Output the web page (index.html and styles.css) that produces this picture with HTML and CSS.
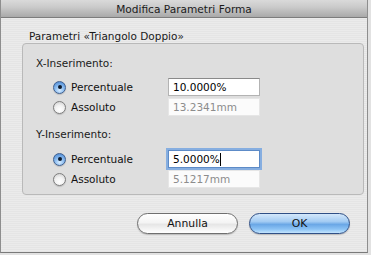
FILE: index.html
```html
<!DOCTYPE html>
<html lang="it">
<head>
<meta charset="utf-8">
<title>Modifica Parametri Forma</title>
<link rel="stylesheet" href="styles.css">
</head>
<body>
<div class="window">
  <div class="titlebar">Modifica Parametri Forma</div>
  <div class="content">
    <div class="group-label">Parametri «Triangolo Doppio»</div>
    <div class="group">
      <div class="section-title">X-Inserimento:</div>
      <div class="row">
        <label class="radio-label"><span class="radio checked"></span>Percentuale</label>
        <div class="field">10.0000%</div>
      </div>
      <div class="row">
        <label class="radio-label"><span class="radio"></span>Assoluto</label>
        <div class="field disabled">13.2341mm</div>
      </div>
      <div class="section-title second">Y-Inserimento:</div>
      <div class="row row-first">
        <label class="radio-label"><span class="radio checked"></span>Percentuale</label>
        <div class="field focused">5.0000%<span class="caret"></span></div>
      </div>
      <div class="row">
        <label class="radio-label"><span class="radio"></span>Assoluto</label>
        <div class="field disabled">5.1217mm</div>
      </div>
    </div>
    <div class="buttons">
      <button class="btn">Annulla</button>
      <button class="btn primary">OK</button>
    </div>
  </div>
</div>
</body>
</html>
```
FILE: styles.css
```css
html, body {
  margin: 0;
  padding: 0;
}
body {
  width: 371px;
  height: 255px;
  background: #e2e2e2;
  font-family: "DejaVu Sans", "Liberation Sans", sans-serif;
  font-size: 10.5px;
  color: #111;
  overflow: hidden;
}
.window {
  width: 366px;
  height: 252px;
  border-left: 1px solid #8e8e8e;
  border-right: 1px solid #8e8e8e;
  border-bottom: 1px solid #7a7a7a;
  background-color: #e8e8e8;
  background-image: repeating-linear-gradient(180deg, #ebebeb 0px, #ebebeb 1px, #e5e5e5 1px, #e5e5e5 2px);
  display: flex;
  flex-direction: column;
}
.titlebar {
  height: 17px;
  line-height: 18px;
  border-bottom: 1px solid #7c7c7c;
  background: linear-gradient(180deg, #dadada 0%, #cbcbcb 40%, #a9a9a9 100%);
  text-align: center;
  color: #1a1a1a;
  font-size: 10.6px;
}
.content {
  padding: 12px 16px 0 21px;
  display: flex;
  flex-direction: column;
}
.group-label {
  height: 13px;
  line-height: 13px;
  padding-left: 7px;
  color: #1a1a1a;
}
.group {
  width: 327px;
  height: 150px;
  border: 1px solid #b9b9b9;
  border-radius: 4px;
  background: #dedede;
  padding: 13px 0 0 13px;
  box-sizing: content-box;
  height: 137px;
  display: flex;
  flex-direction: column;
}
.section-title {
  height: 13px;
  line-height: 13px;
  color: #1a1a1a;
  margin-bottom: 8px;
}
.section-title.second {
  margin-top: 10px;
  margin-bottom: 9px;
}
.row {
  display: grid;
  grid-template-columns: 115px 92px;
  align-items: center;
  height: 18px;
  padding-left: 17px;
  margin-bottom: 2px;
}
.radio-label {
  display: flex;
  align-items: center;
  gap: 5px;
  color: #111;
}
.radio {
  width: 11px;
  height: 11px;
  border-radius: 50%;
  border: 1px solid #7d7d7d;
  background: radial-gradient(circle at 50% 70%, #ffffff 0%, #f2f2f2 45%, #c9c9c9 100%);
  box-shadow: 0 1px 1px rgba(0,0,0,0.15);
  position: relative;
  flex: none;
}
.radio.checked {
  border-color: #3f5f8e;
  background: radial-gradient(circle at 50% 75%, #d7ecff 0%, #8bbcf0 45%, #3f7fcf 100%);
}
.radio.checked::after {
  content: "";
  position: absolute;
  left: 3.5px;
  top: 3.5px;
  width: 4px;
  height: 4px;
  border-radius: 50%;
  background: #0d1a2c;
}
.field {
  height: 18px;
  box-sizing: border-box;
  background: #fff;
  border: 1px solid #b3b3b3;
  border-top-color: #8a8a8a;
  padding-left: 4px;
  line-height: 16px;
  color: #000;
  display: flex;
  align-items: center;
}
.field.disabled {
  border-color: #e6e6e6;
  background: #fbfbfb;
  color: #8c8c8c;
}
.field.focused {
  border: 1px solid #5d8bc7;
  box-shadow: 0 0 0 2px #86aee0;
}
.caret {
  display: inline-block;
  width: 1px;
  height: 13px;
  background: #000;
  margin-left: 0;
}
.buttons {
  display: flex;
  justify-content: flex-end;
  gap: 11px;
  margin-top: 18px;
  padding-right: 1px;
}
.btn {
  width: 101px;
  height: 21px;
  border-radius: 11px;
  border: 1px solid #6f6f6f;
  background: linear-gradient(180deg, #ffffff 0%, #f4f4f4 45%, #e6e6e6 55%, #f7f7f7 85%, #ffffff 100%);
  box-shadow: 0 1px 1px rgba(0,0,0,0.2);
  font-family: "DejaVu Sans", "Liberation Sans", sans-serif;
  font-size: 10.8px;
  color: #111;
  padding: 0;
  line-height: 19px;
}
.btn.primary {
  border-color: #2f4f86;
  background: linear-gradient(180deg, #d4e8fb 0%, #a2cbf3 40%, #6aa7e6 55%, #8cc3f5 80%, #c3e4fd 100%);
}
```
